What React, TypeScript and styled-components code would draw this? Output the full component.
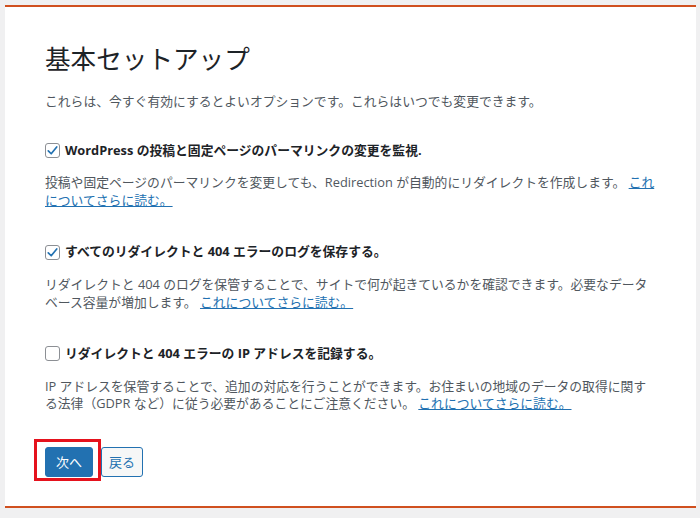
import React from 'react';
import styled, { createGlobalStyle } from 'styled-components';

const GlobalStyle = createGlobalStyle`
  html, body {
    margin: 0;
    padding: 0;
    background: #f0f0f1;
  }
  body {
    font-family: 'Open Sans', 'Noto Sans CJK JP', sans-serif;
    color: #1d2327;
  }
`;

const options = [
  {
    checked: true,
    label: 'WordPress の投稿と固定ページのパーマリンクの変更を監視.',
    desc: '投稿や固定ページのパーマリンクを変更しても、Redirection が自動的にリダイレクトを作成します。',
  },
  {
    checked: true,
    label: 'すべてのリダイレクトと 404 エラーのログを保存する。',
    desc: 'リダイレクトと 404 のログを保管することで、サイトで何が起きているかを確認できます。必要なデータベース容量が増加します。',
  },
  {
    checked: false,
    label: 'リダイレクトと 404 エラーの IP アドレスを記録する。',
    desc: 'IP アドレスを保管することで、追加の対応を行うことができます。お住まいの地域のデータの取得に関する法律（GDPR など）に従う必要があることにご注意ください。',
  },
];

export default function App(): JSX.Element {
  return (
    <>
      <GlobalStyle />
      <Page>
        <Panel>
          <Title>基本セットアップ</Title>
          <Intro>これらは、今すぐ有効にするとよいオプションです。これらはいつでも変更できます。</Intro>
          {options.map((o) => (
            <Option key={o.label}>
              <Label>
                <Box checked={o.checked}>
                  {o.checked && (
                    <svg width="13" height="13" viewBox="0 0 20 20">
                      <path
                        d="M3.5 10.5 L8 15 L16.5 4.5"
                        fill="none"
                        stroke="#2271b1"
                        strokeWidth="2.6"
                        strokeLinecap="round"
                        strokeLinejoin="round"
                      />
                    </svg>
                  )}
                </Box>
                {o.label}
              </Label>
              <Desc>
                {o.desc} <Link href="#">これについてさらに読む。</Link>
              </Desc>
            </Option>
          ))}
          <Actions>
            <Highlight>
              <PrimaryButton>次へ</PrimaryButton>
            </Highlight>
            <SecondaryButton>戻る</SecondaryButton>
          </Actions>
        </Panel>
      </Page>
    </>
  );
}

const Page = styled.div`
  padding: 5px 4px 6px 5px;
`;

const Panel = styled.div`
  background: #fff;
  border-top: 2px solid #d0501f;
  border-bottom: 2px solid #d0501f;
  padding: 36px 41px 29px 40px;
`;

const Title = styled.h1`
  margin: 0 0 17px;
  font-size: 25.6px;
  font-weight: 400;
  line-height: 33px;
  color: #1d2327;
`;

const Intro = styled.p`
  margin: 0 0 31px;
  font-size: 12.8px;
  line-height: 17.6px;
  color: #50575e;
`;

const Option = styled.div`
  margin-bottom: 34px;
`;

const Label = styled.label`
  display: flex;
  align-items: center;
  gap: 5px;
  font-size: 12.8px;
  font-weight: 700;
  line-height: 17.6px;
  color: #1d2327;
`;

const Box = styled.span<{ checked: boolean }>`
  display: inline-flex;
  align-items: center;
  justify-content: center;
  box-sizing: border-box;
  width: 15px;
  height: 15px;
  border: 1px solid #8c8f94;
  border-radius: 3px;
  background: #fff;
  flex-shrink: 0;
`;

const Desc = styled.p`
  margin: 15px 0 0;
  font-size: 12.8px;
  line-height: 17.6px;
  color: #50575e;
`;

const Link = styled.a`
  color: #2271b1;
  text-decoration: underline;
`;

const Actions = styled.div`
  display: flex;
  align-items: center;
  gap: 8px;
  margin-top: 7px;
`;

const Highlight = styled.span`
  position: relative;
  display: inline-flex;
  &::after {
    content: '';
    position: absolute;
    top: -8px;
    left: -11px;
    right: -8px;
    bottom: -4px;
    border: 3px solid #e5121d;
    pointer-events: none;
  }
`;

const ButtonBase = styled.button`
  box-sizing: border-box;
  height: 30px;
  padding: 0 10px;
  border-radius: 3px;
  font-family: 'Open Sans', 'Noto Sans CJK JP', sans-serif;
  font-size: 13px;
  line-height: 28px;
  cursor: pointer;
`;

const PrimaryButton = styled(ButtonBase)`
  width: 48px;
  background: #2271b1;
  border: 1px solid #2271b1;
  color: #fff;
`;

const SecondaryButton = styled(ButtonBase)`
  width: 42px;
  padding: 0;
  background: #f6f7f7;
  border: 1px solid #2271b1;
  color: #2271b1;
`;
